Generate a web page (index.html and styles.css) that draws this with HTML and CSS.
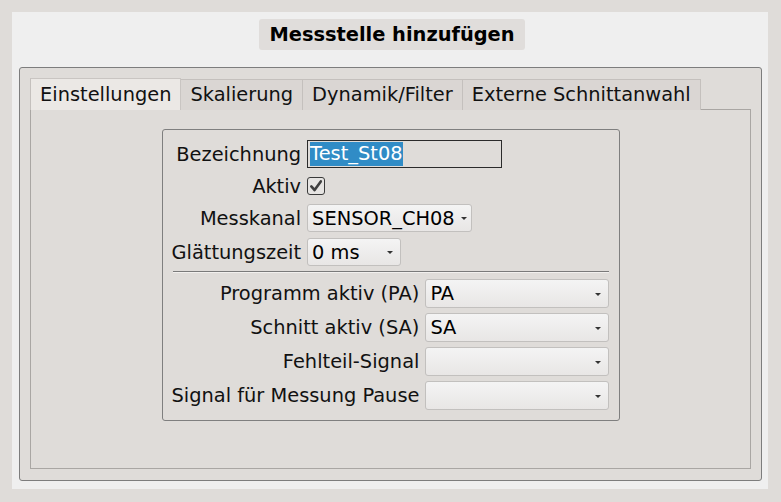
FILE: index.html
```html
<!DOCTYPE html>
<html lang="de">
<head>
<meta charset="utf-8">
<title>Messstelle hinzufügen</title>
<link rel="stylesheet" href="styles.css">
</head>
<body>
<div class="window">
  <div class="title-row"><div class="title">Messstelle hinzufügen</div></div>
  <div class="frame">
    <div class="tabbar">
      <div class="tab tab-active">Einstellungen</div>
      <div class="tab">Skalierung</div>
      <div class="tab">Dynamik/Filter</div>
      <div class="tab">Externe Schnittanwahl</div>
    </div>
    <div class="pane">
      <div class="group">
        <div class="form form-top">
          <div class="label">Bezeichnung</div>
          <div class="lineedit"><span class="sel">Test_St08</span></div>
          <div class="label">Aktiv</div>
          <div class="check-cell">
            <span class="checkbox">
              <svg width="14" height="14" viewBox="0 0 14 14"><path d="M2.3 7.4 L5.6 11 L11.8 2.4" fill="none" stroke="#3f3f3f" stroke-width="2.6" stroke-linecap="round" stroke-linejoin="round"/></svg>
            </span>
          </div>
          <div class="label">Messkanal</div>
          <div class="combo combo-kanal"><span>SENSOR_CH08</span><i class="arrow"></i></div>
          <div class="label">Glättungszeit</div>
          <div class="combo combo-zeit"><span>0 ms</span><i class="arrow"></i></div>
        </div>
        <div class="separator"></div>
        <div class="form form-bottom">
          <div class="label">Programm aktiv (PA)</div>
          <div class="combo"><span>PA</span><i class="arrow"></i></div>
          <div class="label">Schnitt aktiv (SA)</div>
          <div class="combo"><span>SA</span><i class="arrow"></i></div>
          <div class="label">Fehlteil-Signal</div>
          <div class="combo"><span></span><i class="arrow"></i></div>
          <div class="label">Signal für Messung Pause</div>
          <div class="combo"><span></span><i class="arrow"></i></div>
        </div>
      </div>
    </div>
  </div>
</div>
</body>
</html>
```

FILE: styles.css
```css
* { box-sizing: border-box; }

html, body {
  margin: 0;
  padding: 0;
  background: #dfdcd9;
  font-family: "DejaVu Sans", "Liberation Sans", sans-serif;
  font-size: 19.4px;
  color: #111;
}

.window {
  margin: 12px 13px 0 12px;
  height: 477px;
  background: #efefef;
  padding: 7px 6px 8px 7px;
  display: flex;
  flex-direction: column;
}

.title-row {
  display: flex;
  justify-content: center;
  padding-left: 3px;
}

.title {
  background: #e0dddb;
  border-radius: 3px;
  height: 31px;
  line-height: 31px;
  padding: 0 10px;
  font-weight: bold;
  color: #000;
}

.frame {
  margin-top: 17px;
  flex: 1;
  border: 1px solid #7d7d7d;
  border-radius: 3px;
  background: #dfdcd9;
  padding: 10px 10px 11px 10px;
  display: flex;
  flex-direction: column;
}

.tabbar {
  display: flex;
  height: 32px;
  position: relative;
  z-index: 1;
}

.tab {
  height: 31px;
  margin-top: 1px;
  line-height: 30px;
  padding: 0 9px;
  background: #dad6d3;
  border: 1px solid #c4c0bd;
  border-bottom: none;
  border-left: none;
  color: #111;
}

.tab:first-child { border-left: 1px solid #c4c0bd; }

.tab-active {
  background: #ebe8e5;
  height: 32px;
  margin-top: 0;
  line-height: 31px;
  padding: 0 9px 0 9px;
  border-color: #c9c5c2;
}

.pane {
  flex: 1;
  margin-top: -1px;
  border: 1px solid #a9a6a3;
  background: #dfdcd9;
  display: flex;
  justify-content: center;
  align-items: flex-start;
  padding-top: 19px;
}

.group {
  width: 458px;
  border: 1px solid #7f7f7f;
  border-radius: 3px;
  padding: 10px 10px 10px 9px;
}

.form {
  display: grid;
  grid-template-columns: auto 1fr;
  column-gap: 6px;
  align-items: center;
}

.form-top {
  grid-template-rows: 28px 24px 28px 28px;
  row-gap: 6px;
}

.form-bottom {
  grid-template-rows: repeat(4, 29px);
  row-gap: 5px;
}

.label {
  text-align: right;
  white-space: nowrap;
  color: #111;
}

.lineedit {
  width: 195px;
  height: 28px;
  border: 1px solid #2b2b2b;
  padding: 0 2px;
  display: flex;
  align-items: center;
}

.sel {
  background: #308cc6;
  color: #fff;
  line-height: 24px;
}

.check-cell {
  display: flex;
  align-items: center;
}

.checkbox {
  width: 18px;
  height: 18px;
  border: 1.5px solid #3a3a3a;
  border-radius: 3px;
  background: #e6e4e2;
  display: flex;
  align-items: center;
  justify-content: center;
}

.combo {
  height: 100%;
  border: 1px solid #c2c0be;
  border-radius: 3px;
  background: linear-gradient(#f4f4f4, #e8e6e5);
  display: flex;
  align-items: center;
  justify-content: space-between;
  padding: 0 7px 0 4px;
  color: #000;
}

.combo-kanal { width: 165px; justify-self: start; }
.combo-zeit { width: 94px; justify-self: start; }

.arrow {
  flex: none;
  margin-left: 6px;
  width: 0;
  height: 0;
  border-left: 3px solid transparent;
  border-right: 3px solid transparent;
  border-top: 3px solid #333;
  margin-top: 1px;
}

.separator {
  height: 2px;
  margin: 5px 0 6px 1px;
  border-top: 1px solid #7a7a7a;
  border-bottom: 1px solid #f2f0ee;
}
```
